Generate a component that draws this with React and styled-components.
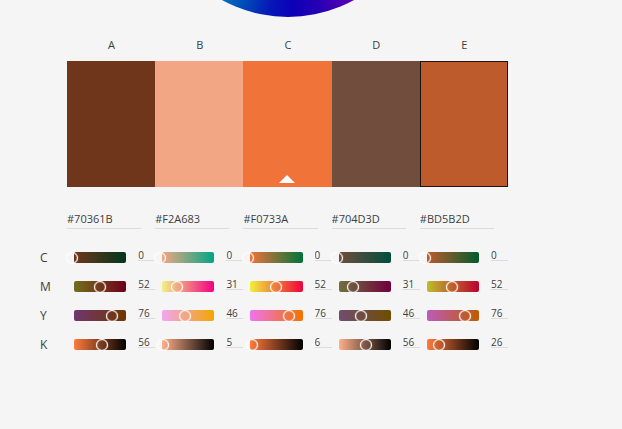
import React, { useState } from "react";
import styled, { createGlobalStyle } from "styled-components";

const GlobalStyle = createGlobalStyle`
  * { box-sizing: border-box; }
  body {
    margin: 0;
    background: #f5f5f5;
    color: #3e3e3e;
    font-family: "Open Sans", "Noto Sans", sans-serif;
    font-size: 11px;
  }
  button, input { font: inherit; color: inherit; }
`;

const Page = styled.main`
  padding: 0 114px 75px 40px;
`;

const WheelClip = styled.div`
  display: flex;
  justify-content: center;
  align-items: flex-end;
  height: 17px;
  padding-left: 27px;
  overflow: hidden;
`;

const Wheel = styled.div`
  flex: none;
  width: 274px;
  height: 274px;
  border-radius: 50%;
  background: conic-gradient(
    #ff0000, #ff00a0 80deg, #8000b4 140deg, #5c00b4 152deg, #2800b4 166deg,
    #0c00b8 178deg, #0618b8 188deg, #0048b8 199deg, #0072c0 209deg,
    #00b0a0 240deg, #00c000 280deg, #ffe000 320deg, #ff0000
  );
`;

const Row = styled.div`
  display: grid;
  grid-template-columns: 27px repeat(5, minmax(0, 1fr));
`;

const LetterRow = styled(Row)`
  padding: 20px 0 8px;
  line-height: 16px;
  text-align: center;
`;

const Letter = styled.span`
  padding-left: 1px;
  grid-column-start: ${(p) => p.$column};
`;

const Swatch = styled.button`
  display: flex;
  justify-content: center;
  align-items: flex-end;
  grid-column-start: ${(p) => p.$column};
  height: 126px;
  padding: 0 0 3px;
  border: 1px solid ${(p) => (p.$selected ? "#20130c" : p.$color)};
  background: ${(p) => p.$color};
  cursor: pointer;
`;

const BaseMarker = styled.svg`
  display: block;
  width: 16px;
  height: 8px;
  fill: #fff;
`;

const HexRow = styled(Row)`
  padding: 22px 0 14px;
`;

const HexInput = styled.input`
  grid-column-start: ${(p) => p.$column};
  width: auto;
  min-width: 0;
  height: 20px;
  margin-right: 14px;
  padding: 0;
  border: 0;
  border-bottom: 1px solid #dcdcdc;
  background: transparent;
  outline: none;
`;

const SliderRow = styled(Row)`
  align-items: center;
  height: 29px;
`;

const InkName = styled.span`
  font-size: 12px;
`;

const Control = styled.div`
  display: flex;
  align-items: center;
  gap: 12px;
  padding-left: 7px;
`;

const Track = styled.div`
  display: flex;
  flex: 1;
  min-width: 0;
  height: 11px;
  border-radius: 2px;
  background: linear-gradient(to right, ${(p) => p.$from}, ${(p) => p.$to});
`;

const Range = styled.input`
  appearance: none;
  flex: 1;
  min-width: 0;
  height: 11px;
  margin: 0 -5px 0 -8px;
  background: transparent;
  outline: none;
  cursor: pointer;

  &::-webkit-slider-thumb {
    appearance: none;
    width: 12px;
    height: 12px;
    border: 1px solid #fff;
    border-radius: 50%;
    background: transparent;
    box-shadow: 0 0 1px #fff, inset 0 0 1px #fff;
  }
`;

const Amount = styled.input`
  flex: none;
  width: 17px;
  height: 12px;
  margin-bottom: 5px;
  padding: 0;
  border: 0;
  border-bottom: 1px solid #dcdcdc;
  background: transparent;
  font-size: 10px;
  line-height: 11px;
  outline: none;
`;

const INKS = ["C", "M", "Y", "K"];

const COLORS = [
  { name: "A", hex: "#70361B", inks: [0, 52, 76, 56] },
  { name: "B", hex: "#F2A683", inks: [0, 31, 46, 5] },
  { name: "C", hex: "#F0733A", inks: [0, 52, 76, 6], base: true },
  { name: "D", hex: "#704D3D", inks: [0, 31, 46, 56] },
  { name: "E", hex: "#BD5B2D", inks: [0, 52, 76, 26] },
];

// The colours reached when one ink goes from none to full and the rest stay.
function inkRange(hex, ink) {
  const rgb = [1, 3, 5].map((i) => parseInt(hex.slice(i, i + 2), 16));
  const peak = Math.max(...rgb);
  const css = (parts) => `rgb(${parts.join(", ")})`;
  if (ink === 3) {
    return [css(rgb.map((v) => Math.round((v * 255) / peak))), "#000"];
  }
  const withChannel = (value) => css(rgb.map((v, i) => (i === ink ? value : v)));
  return [withChannel(peak), withChannel(0)];
}

function InkSlider({ label, hex, ink, initial }) {
  const [amount, setAmount] = useState(initial);
  const [from, to] = inkRange(hex, ink);
  const change = (event) => setAmount(event.target.value);
  return (
    <Control>
      <Track $from={from} $to={to}>
        <Range type="range" min="0" max="100" value={amount} onChange={change} aria-label={label} />
      </Track>
      <Amount inputMode="numeric" value={amount} onChange={change} aria-label={`${label} value`} />
    </Control>
  );
}

export default function App() {
  const [selected, setSelected] = useState("E");
  return (
    <>
      <GlobalStyle />
      <Page>
        <WheelClip>
          <Wheel />
        </WheelClip>
        <LetterRow>
          {COLORS.map((c, i) => (
            <Letter key={c.name} $column={i + 2}>{c.name}</Letter>
          ))}
        </LetterRow>
        <Row>
          {COLORS.map((c, i) => (
            <Swatch
              key={c.name}
              type="button"
              $column={i + 2}
              $color={c.hex}
              $selected={selected === c.name}
              aria-label={`Colour ${c.name}`}
              aria-pressed={selected === c.name}
              onClick={() => setSelected(c.name)}
            >
              {c.base && (
                <BaseMarker viewBox="0 0 16 8" aria-hidden="true">
                  <path d="M8 0L16 8H0Z" />
                </BaseMarker>
              )}
            </Swatch>
          ))}
        </Row>
        <HexRow>
          {COLORS.map((c, i) => (
            <HexInput key={c.name} $column={i + 2} defaultValue={c.hex} aria-label={`Hex of ${c.name}`} />
          ))}
        </HexRow>
        {INKS.map((name, ink) => (
          <SliderRow key={name}>
            <InkName>{name}</InkName>
            {COLORS.map((c) => (
              <InkSlider
                key={c.name}
                label={`${name} of ${c.name}`}
                hex={c.hex}
                ink={ink}
                initial={c.inks[ink]}
              />
            ))}
          </SliderRow>
        ))}
      </Page>
    </>
  );
}
